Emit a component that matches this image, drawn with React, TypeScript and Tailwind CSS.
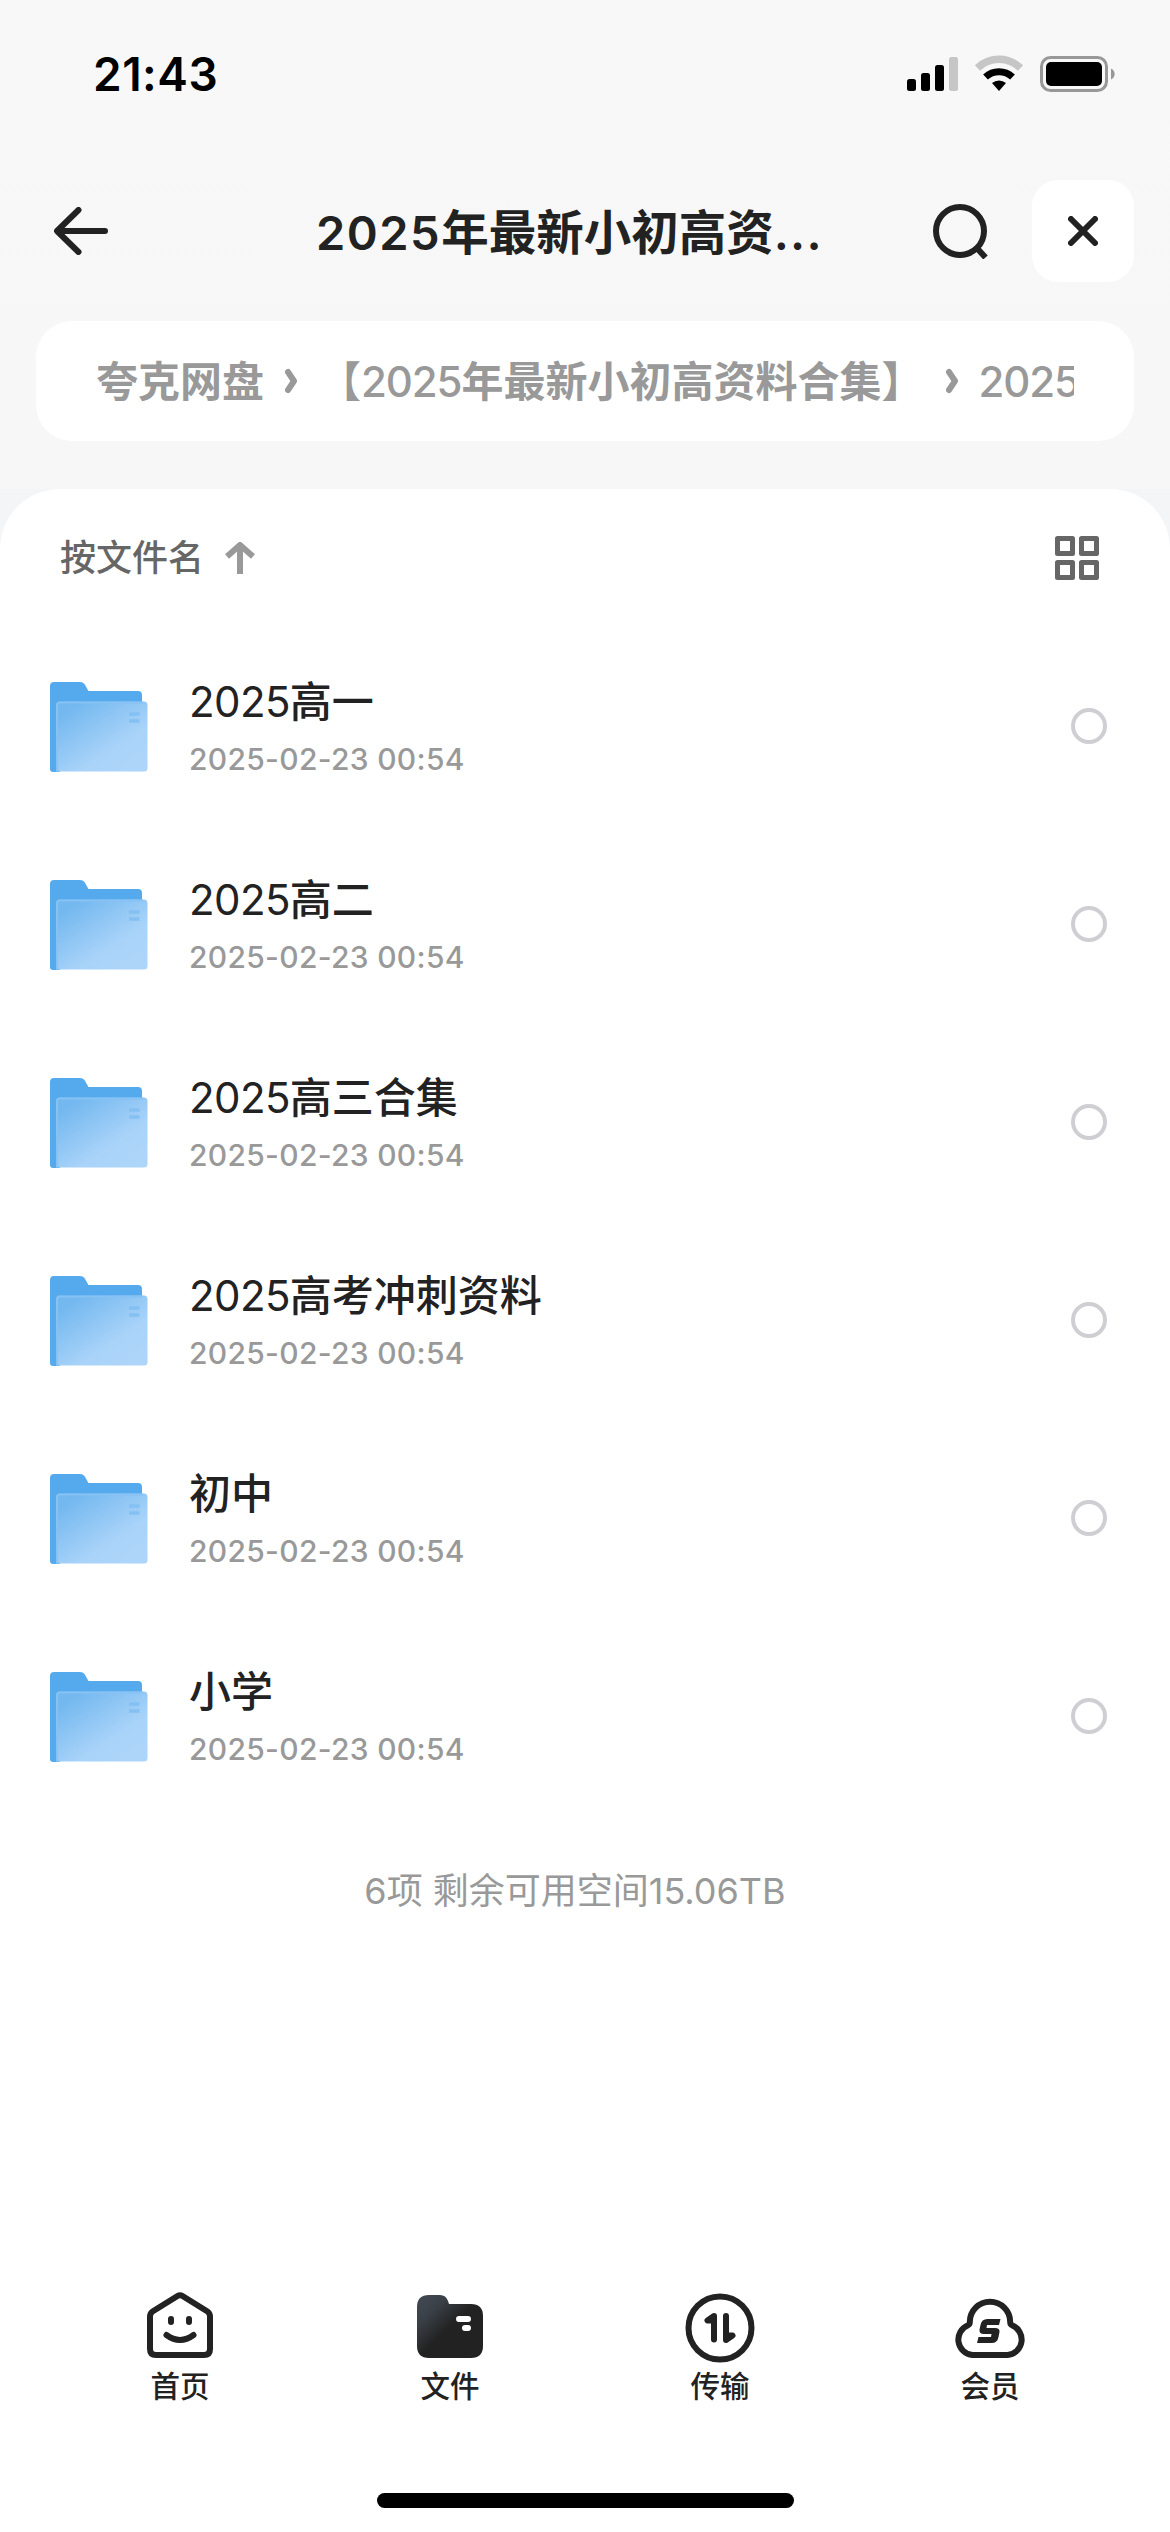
import { type ReactNode } from "react";

const files = [
  { year: "2025", name: "高一", time: "2025-02-23 00:54" },
  { year: "2025", name: "高二", time: "2025-02-23 00:54" },
  { year: "2025", name: "高三合集", time: "2025-02-23 00:54" },
  { year: "2025", name: "高考冲刺资料", time: "2025-02-23 00:54" },
  { year: "", name: "初中", time: "2025-02-23 00:54" },
  { year: "", name: "小学", time: "2025-02-23 00:54" },
];

const StatusBar = () => (
  <div className="flex h-[150px] items-start justify-between pl-[93px] pr-[54px]">
    <span className="mt-[46px] text-[46px] font-semibold leading-[56px] tracking-[0.5px] text-black">
      21:43
    </span>
    <div className="mt-[54px] flex items-start">
      {/* Signal */}
      <svg width="52" height="38" viewBox="0 0 52 38">
        <rect x="0" y="25" width="9" height="12" rx="2.5" />
        <rect x="14" y="19" width="9" height="18" rx="2.5" />
        <rect x="28" y="11" width="9" height="26" rx="2.5" />
        <rect x="42" y="3" width="9" height="34" rx="2.5" fill="#c6c6c6" />
      </svg>
      {/* Wifi */}
      <svg className="ml-[15px]" width="50" height="38" viewBox="0 0 50 38">
        <path d="M3.5 14a31 31 0 0 1 43 0" fill="none" stroke="#c6c6c6" strokeWidth="7.5" />
        <path d="M11.5 23a20 20 0 0 1 27 0" fill="none" stroke="#000" strokeWidth="7" />
        <path d="M18 29a11 11 0 0 1 14 0l-7 8z" />
      </svg>
      {/* Battery */}
      <svg className="ml-4" width="76" height="38" viewBox="0 0 76 38">
        <rect x="1.5" y="3.5" width="65" height="33" rx="9" fill="none" stroke="#989898" strokeWidth="3" />
        <rect x="6" y="8" width="56" height="24" rx="5" />
        <path d="M71 14.5a6 6 0 0 1 0 11z" fill="#989898" />
      </svg>
    </div>
  </div>
);

const Header = () => (
  <header className="flex h-[162px] items-center px-9">
    <svg className="ml-[18px]" width="54" height="48" viewBox="0 0 54 48" fill="none" stroke="#222" strokeWidth="6" strokeLinecap="round" strokeLinejoin="round">
      <path d="M51 24H4M24.5 3L3 24l21.5 21" />
    </svg>
    <h1 className="ml-[208px] mt-[3px] w-[520px] whitespace-nowrap text-[47.5px] font-semibold leading-[60px] text-[#222]">
      <span className="text-[47px] tracking-[1.5px]">2025</span>
      年最新小初高资<span className="tracking-[1.3px]">...</span>
    </h1>
    <svg className="ml-[96px]" width="57" height="56" viewBox="0 0 57 56" fill="none" stroke="#222" strokeWidth="6">
      <circle cx="28" cy="28" r="24" />
      <path d="M43.5 43.5l10 11" />
    </svg>
    <button type="button" className="ml-auto flex size-[102px] items-center justify-center rounded-[26px] bg-white">
      <svg width="30" height="30" viewBox="0 0 30 30" stroke="#222" strokeWidth="6" strokeLinecap="round">
        <path d="M3 3l24 24M27 3L3 27" />
      </svg>
    </button>
  </header>
);

const Chevron = () => (
  <svg className="shrink-0" width="12" height="28" viewBox="0 0 12 28" fill="none" stroke="#999" strokeWidth="6" strokeLinecap="round" strokeLinejoin="round">
    <path d="M3 5l6 9-6 9" />
  </svg>
);

const Breadcrumb = () => (
  <nav className="mx-9 mt-[9px] h-[120px] rounded-[36px] bg-white px-[60px]">
    <div className="flex h-full items-center overflow-hidden whitespace-nowrap text-[42px] font-semibold text-[#999]">
      <span className="mr-[21px]">夸克网盘</span>
      <Chevron />
      <span className="ml-[22px] mr-[23px]">
        【<span className="font-medium tracking-[-1.1px]">2025</span>年最新小初高资料合集】
      </span>
      <Chevron />
      <span className="ml-[20px] font-medium tracking-[-1.1px]">2025</span>
    </div>
  </nav>
);

const FolderIcon = () => (
  <svg className="mt-[2px]" width="98" height="90" viewBox="0 0 98 90">
    <defs>
      <linearGradient id="folder" x1="0.15" y1="0.1" x2="0.85" y2="0.9">
        <stop offset="0" stopColor="#73b8ef" />
        <stop offset="0.7" stopColor="#a9d3f9" />
        <stop offset="1" stopColor="#add5f9" />
      </linearGradient>
    </defs>
    <path d="M4 0h26q3 0 4.5 2l4 7H88q4 0 4 4v20H10v57H3q-3 0-3-3V4q0-4 4-4z" fill="#55aaee" />
    <path d="M9.5 19.5H94a3.5 3.5 0 0 1 3.5 3.5v63a3.5 3.5 0 0 1-3.5 3.5H6V23a3.5 3.5 0 0 1 3.5-3.5z" fill="url(#folder)" />
    <path d="M7 89V23.5q0-3 3-3H93" fill="none" stroke="#86c2f3" strokeWidth="2" />
    <path d="M79 32h10.5M79 39h10.5" stroke="#85c0f2" strokeWidth="3.5" />
  </svg>
);

const FileRow = ({ year, name, time }: { year: string; name: string; time: string }) => (
  <li className="flex h-[198px] items-center pl-[50px] pr-[63px]">
    <FolderIcon />
    <div className="ml-[41px] mt-[5px] flex-1">
      <p className="text-[42px] font-medium leading-[56px] text-[#222]">
        <span className="font-normal tracking-[-0.6px]">{year}</span>
        {name}
      </p>
      <p className="mt-[5px] text-[30px] font-medium leading-[48px] tracking-[0.3px] text-[#999]">{time}</p>
    </div>
    <span className="size-9 rounded-full border-4 border-[#cfcfd3]" />
  </li>
);

const Tab = ({ label, children }: { label: string; children: ReactNode }) => (
  <button type="button" className="flex w-[270px] flex-col items-center">
    <svg width="78" height="78" viewBox="0 0 78 78" fill="none" stroke="#222" strokeWidth="6" strokeLinecap="round" strokeLinejoin="round">
      {children}
    </svg>
    <span className="mt-px text-[29.5px] font-medium leading-[42px] text-[#222]">{label}</span>
  </button>
);

const TabBar = () => (
  <nav className="flex justify-center">
    <Tab label="首页">
      <path d="M36.5 10q2.5-1.5 5 0l25 15.5q2.5 2 2.5 5v32.5q0 6-6 6H15q-6 0-6-6V30.5q0-3 2.5-5z" />
      <path d="M30 33v3M48 33v3M25.5 49q13.5 10 27 0" />
    </Tab>
    <Tab label="文件">
      <defs>
        <linearGradient id="tab-file" x1="0.05" y1="0.15" x2="0.45" y2="0.55">
          <stop offset="0" stopColor="#3f464f" />
          <stop offset="0.35" stopColor="#3a4047" />
          <stop offset="1" stopColor="#222" />
        </linearGradient>
      </defs>
      <path d="M18 9h11q6 0 8 6l1 3h22q12 0 12 12v30q0 12-12 12H18Q6 72 6 60V21Q6 9 18 9z" fill="url(#tab-file)" stroke="none" />
      <path d="M48 33h9M54 42h3" stroke="#fff" />
    </Tab>
    <Tab label="传输">
      <circle cx="39" cy="42" r="31.5" />
      <path d="M33 53.5V30l-6.5 4.5H33M45 30v24l6.5-4.5H45" />
    </Tab>
    <Tab label="会员">
      <path d="M21.5 69A15.5 15.5 0 0 1 17 39.2Q18.9 38.5 18.8 36A20.2 20.2 0 0 1 59.2 36Q59.1 38.5 61 39.2A15.5 15.5 0 0 1 56.5 69z" />
      <path d="M49.5 33l-1.5 6H36l-.5 3H44q5 0 4.5 4l-1 5q-1 6-7 6H26l1.5-6H40l.5-3H33q-5 0-4.5-4.5l1-4.5q1-6 7-6z" fill="#222" stroke="none" />
    </Tab>
  </nav>
);

const App = () => {
  return (
    <div className="flex h-[2532px] w-[1170px] flex-col bg-[#f4f5f7] font-[Inter,'Noto_Sans_CJK_SC',sans-serif]">
      <div className="h-[489px] shrink-0 bg-linear-to-b from-[#f8f8f8] to-[#f7f7f7]">
        <StatusBar />
        <Header />
        <Breadcrumb />
      </div>

      <main className="flex flex-1 flex-col rounded-t-[60px] bg-white">
        {/* Sort bar */}
        <div className="flex h-[138px] items-center justify-between pl-[60px] pr-[71px]">
          <div className="flex items-center">
            <span className="text-[36px] font-medium leading-[48px] text-[#666]">按文件名</span>
            <svg className="ml-[21px]" width="30" height="32" viewBox="0 0 30 32" fill="none" stroke="#999" strokeWidth="6" strokeLinejoin="round">
              <path d="M15 32V4M2 14.5L15 3l13 11.5" />
            </svg>
          </div>
          <svg width="44" height="44" viewBox="0 0 44 44" fill="none" stroke="#666" strokeWidth="5" strokeLinejoin="round">
            <path d="M2.5 2.5h15v15h-15zM26.5 2.5h15v15h-15zM2.5 26.5h15v15h-15zM26.5 26.5h15v15h-15z" />
          </svg>
        </div>

        <ul>
          {files.map((file) => (
            <FileRow key={file.name} {...file} />
          ))}
        </ul>

        <p className="mt-[52px] pr-[20px] text-center text-[36px] leading-[48px] text-[#999]">
          6项 剩余可用空间15.06TB
        </p>

        {/* Tabs and home indicator */}
        <div className="mt-auto">
          <TabBar />
          <div className="mx-auto mb-6 mt-[86px] h-[15px] w-[417px] rounded-full bg-black" />
        </div>
      </main>
    </div>
  );
};

export default App;
